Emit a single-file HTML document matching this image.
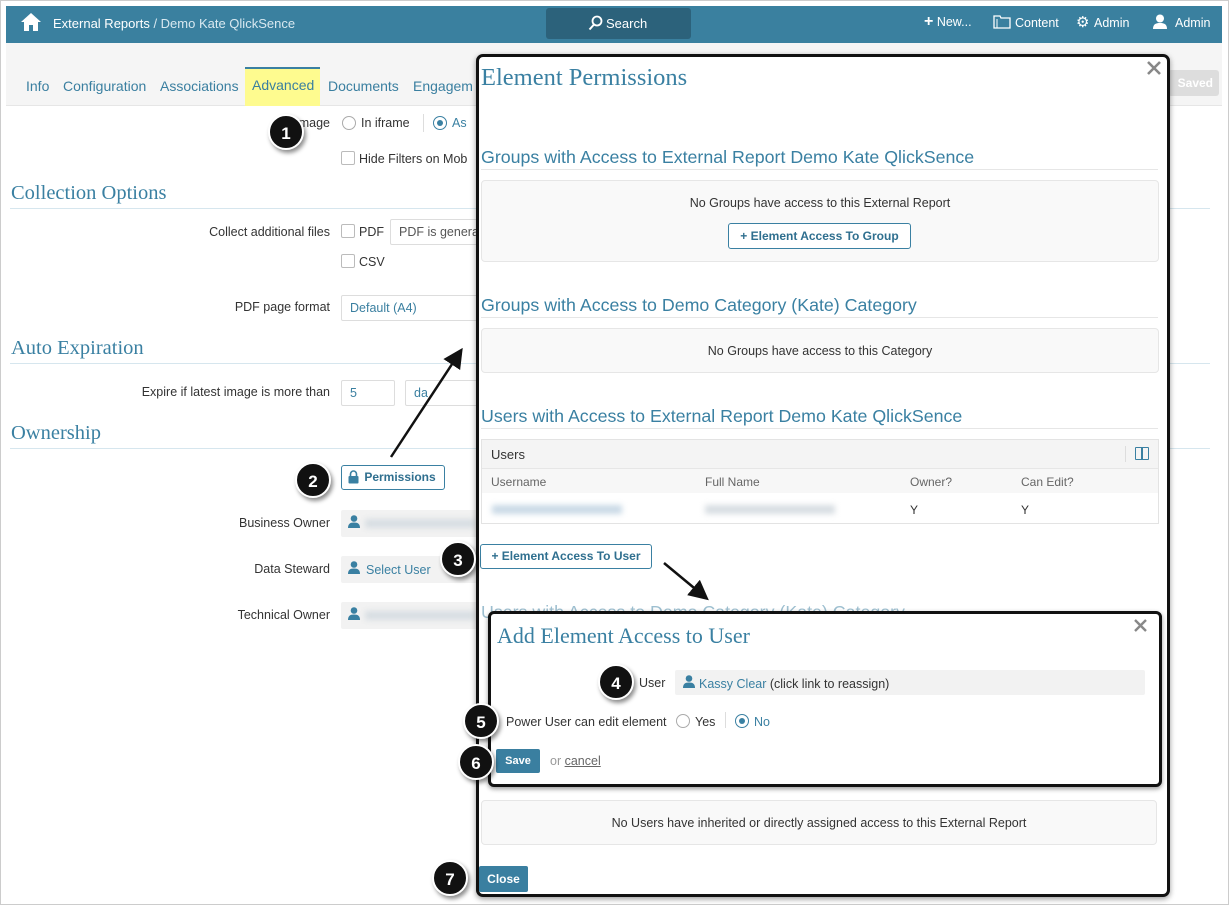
<!DOCTYPE html>
<html><head><meta charset="utf-8"><style>
*{box-sizing:border-box;margin:0;padding:0}
body{width:1229px;height:905px;position:relative;overflow:hidden;background:#fff;font-family:"Liberation Sans",Arial,sans-serif;font-size:13px;color:#333}
.a{position:absolute;white-space:nowrap}
.nav{left:6px;top:6px;width:1216px;height:37px;background:#3a809f;color:#fff}
.sub{left:6px;top:43px;width:1216px;height:63px;background:#f5f5f5;border-bottom:1px solid #e6e6e6}
.tab{color:#3a7fa0;font-size:14px;top:78px}
.serif{font-family:"Liberation Serif",serif;color:#3a80a2}
.lbl{font-size:12.5px;color:#333;text-align:right}
.r{right:899px}
.hr{height:1px;background:#d6e6ee}
.inp{border:1px solid #ddd;border-radius:2px;background:#fff;height:26px;font-size:12.5px;padding:5px 8px;color:#3a7fa0}
.cb{width:14px;height:14px;border:1px solid #bbb;border-radius:2px;background:#fff}
.usr{background:#f2f2f2;height:27px;border-radius:2px}
.circ{width:36px;height:36px;border-radius:50%;background:#111;color:#fff;font-weight:bold;font-size:17px;text-align:center;line-height:36px;box-shadow:2px 3px 4px rgba(0,0,0,.45);border:2px solid #fff}
.modal{left:476px;top:54px;width:694px;height:843px;border:3px solid #111;border-radius:7px;background:#fff;box-shadow:0 2px 6px rgba(0,0,0,.4)}
.h2{font-size:17.8px;color:#3a80a2}
.well{border:1px solid #e6e6e6;border-radius:4px;background:#f9f9f9}
.btn{border:1px solid #3a80a2;border-radius:3px;background:#fff;color:#2f6f8f;font-weight:bold;font-size:12px;text-align:center}
.pbtn{background:#3a7fa0;color:#fff;font-weight:bold;font-size:12px;border-radius:2px;text-align:center}
.blur{background:#d7dde2;filter:blur(3px);height:9px}
.radio{width:14px;height:14px;border:1px solid #aaa;border-radius:50%;background:#fff}
.radio.on{border-color:#3a80a2}
.radio.on:after{content:"";position:absolute;left:3px;top:3px;width:6px;height:6px;border-radius:50%;background:#3a80a2}
</style></head><body>
<div class="a" style="left:0;top:0;width:1229px;height:905px;border:1px solid #ccc"></div>
<div class="a nav"></div>
<svg class="a" style="left:20px;top:12px" width="22" height="20" viewBox="0 0 22 20"><path d="M11 1L1 10h3v9h5v-6h4v6h5v-9h3z" fill="#fff"/></svg>
<div class="a" style="left:53px;top:16px;color:#fff;font-size:13px">External Reports <span style="color:#d8e8f0">/ Demo Kate QlickSence</span></div>
<div class="a" style="left:546px;top:8px;width:145px;height:31px;background:#2c627b;border-radius:3px"></div>
<svg class="a" style="left:588px;top:15px" width="15" height="16" viewBox="0 0 15 16"><circle cx="9" cy="6" r="4.5" stroke="#fff" stroke-width="1.8" fill="none"/><path d="M6 9.5L1.5 14.5" stroke="#fff" stroke-width="2"/></svg>
<div class="a" style="left:606px;top:16px;color:#fff;font-size:13px">Search</div>
<div class="a" style="left:924px;top:15px;color:#fff;font-size:12.5px"><b style="font-size:16px;line-height:12px">+</b> New...</div>
<svg class="a" style="left:993px;top:15px" width="18" height="14" viewBox="0 0 18 14"><path d="M1 1h6l1 2h9v10H1z" stroke="#fff" stroke-width="1.3" fill="none"/><path d="M4 4v9" stroke="#fff"/></svg>
<div class="a" style="left:1015px;top:16px;color:#fff;font-size:12.5px">Content</div>
<div class="a" style="left:1076px;top:13px;color:#fff;font-size:15px">⚙</div>
<div class="a" style="left:1094px;top:16px;color:#fff;font-size:12.5px">Admin</div>
<svg class="a" style="left:1152px;top:14px" width="16" height="15" viewBox="0 0 16 15"><circle cx="8" cy="4.5" r="4" fill="#fff"/><path d="M1 15c0-5 3-6 7-6s7 1 7 6z" fill="#fff"/></svg>
<div class="a" style="left:1175px;top:16px;color:#fff;font-size:12.5px">Admin</div>
<div class="a sub"></div>
<div class="a" style="left:245px;top:67px;width:75px;height:39px;background:#fefb8f;border-top:2px solid #3a80a2"></div>
<div class="a tab" style="left:26px">Info</div>
<div class="a tab" style="left:63px">Configuration</div>
<div class="a tab" style="left:160px">Associations</div>
<div class="a tab" style="left:252px;top:77px">Advanced</div>
<div class="a tab" style="left:328px">Documents</div>
<div class="a tab" style="left:413px">Engagem</div>
<div class="a" style="left:1168px;top:70px;width:51px;height:26px;background:#ddd;border-radius:3px;color:#fff;font-weight:bold;font-size:12px;line-height:26px;text-align:right;padding-right:6px">Saved</div>

<!-- left form -->
<div class="a lbl r" style="top:116px">mage</div>
<div class="a radio" style="left:342px;top:116px"></div>
<div class="a lbl" style="left:361px;top:116px">In iframe</div>
<div class="a" style="left:423px;top:114px;width:1px;height:18px;background:#ddd"></div>
<div class="a radio on" style="left:433px;top:116px"></div>
<div class="a lbl" style="left:452px;top:116px;color:#3a80a2">As</div>
<div class="a cb" style="left:341px;top:151px"></div>
<div class="a lbl" style="left:359px;top:152px">Hide Filters on Mob</div>
<div class="a serif" style="left:11px;top:182px;font-size:20.5px">Collection Options</div>
<div class="a hr" style="left:10px;top:208px;width:466px"></div>
<div class="a lbl r" style="top:225px">Collect additional files</div>
<div class="a cb" style="left:341px;top:224px"></div>
<div class="a lbl" style="left:359px;top:225px">PDF</div>
<div class="a inp" style="left:390px;top:219px;width:90px;color:#555">PDF is genera</div>
<div class="a cb" style="left:341px;top:254px"></div>
<div class="a lbl" style="left:359px;top:255px">CSV</div>
<div class="a lbl r" style="top:300px">PDF page format</div>
<div class="a inp" style="left:341px;top:295px;width:140px">Default (A4)</div>
<div class="a serif" style="left:11px;top:337px;font-size:20.5px">Auto Expiration</div>
<div class="a hr" style="left:10px;top:363px;width:466px"></div>
<div class="a hr" style="left:1158px;top:363px;width:52px"></div>
<div class="a hr" style="left:1158px;top:208px;width:52px"></div>
<div class="a hr" style="left:1158px;top:448px;width:52px"></div>
<div class="a lbl r" style="top:385px">Expire if latest image is more than</div>
<div class="a inp" style="left:341px;top:380px;width:54px">5</div>
<div class="a inp" style="left:405px;top:380px;width:76px">da</div>
<div class="a serif" style="left:11px;top:422px;font-size:20.5px">Ownership</div>
<div class="a hr" style="left:10px;top:448px;width:466px"></div>
<div class="a btn" style="left:341px;top:465px;width:104px;height:25px;line-height:23px;padding-left:14px">Permissions</div>
<svg class="a" style="left:348px;top:470px" width="11" height="14" viewBox="0 0 11 14"><path d="M2.5 6V4a3 3 0 0 1 6 0v2" stroke="#3a80a2" stroke-width="1.6" fill="none"/><rect x="0.5" y="6" width="10" height="7.5" rx="1" fill="#3a80a2"/></svg>
<div class="a lbl r" style="top:516px">Business Owner</div>
<div class="a usr" style="left:341px;top:510px;width:140px"></div>
<div class="a blur" style="left:365px;top:519px;width:110px"></div>
<div class="a lbl r" style="top:562px">Data Steward</div>
<div class="a usr" style="left:341px;top:556px;width:140px"></div>
<div class="a lbl" style="left:366px;top:563px;color:#3a80a2">Select User</div>
<div class="a lbl r" style="top:608px">Technical Owner</div>
<div class="a usr" style="left:341px;top:602px;width:140px"></div>
<div class="a blur" style="left:365px;top:611px;width:110px"></div>
<svg class="a" style="left:348px;top:515px" width="12" height="110" viewBox="0 0 12 110"><g fill="#3a80a2"><circle cx="6" cy="3.5" r="3.3"/><path d="M0 13c0-4 2-5.5 6-5.5s6 1.5 6 5.5z"/><circle cx="6" cy="49.5" r="3.3"/><path d="M0 59c0-4 2-5.5 6-5.5s6 1.5 6 5.5z"/><circle cx="6" cy="95.5" r="3.3"/><path d="M0 105c0-4 2-5.5 6-5.5s6 1.5 6 5.5z"/></g></svg>

<!-- modal -->
<div class="a modal"></div>
<div class="a serif" style="left:481px;top:64px;font-size:24.5px">Element Permissions</div>
<svg class="a" style="left:1147px;top:61px" width="14" height="14" viewBox="0 0 14 14"><path d="M1 1L13 13M13 1L1 13" stroke="#888" stroke-width="2.6"/></svg>
<div class="a h2" style="left:481px;top:147px">Groups with Access to External Report Demo Kate QlickSence</div>
<div class="a hr" style="left:481px;top:169px;width:677px;background:#e6e6e6"></div>
<div class="a well" style="left:481px;top:180px;width:678px;height:82px"></div>
<div class="a" style="left:481px;top:196px;width:678px;text-align:center;font-size:12.5px">No Groups have access to this External Report</div>
<div class="a btn" style="left:728px;top:223px;width:183px;height:26px;line-height:24px">+ Element Access To Group</div>
<div class="a h2" style="left:481px;top:295px">Groups with Access to Demo Category (Kate) Category</div>
<div class="a hr" style="left:481px;top:317px;width:677px;background:#e6e6e6"></div>
<div class="a well" style="left:481px;top:328px;width:678px;height:45px"></div>
<div class="a" style="left:481px;top:344px;width:678px;text-align:center;font-size:12.5px">No Groups have access to this Category</div>
<div class="a h2" style="left:481px;top:406px">Users with Access to External Report Demo Kate QlickSence</div>
<div class="a hr" style="left:481px;top:428px;width:677px;background:#e6e6e6"></div>
<div class="a" style="left:481px;top:439px;width:678px;height:85px;border:1px solid #e3e3e3;background:#fff"></div>
<div class="a" style="left:482px;top:440px;width:676px;height:29px;background:#f4f4f4;border-bottom:1px solid #e6e6e6"></div>
<div class="a" style="left:491px;top:447px;font-size:13px">Users</div>
<div class="a" style="left:1125px;top:446px;width:1px;height:16px;background:#ddd"></div>
<div class="a" style="left:1135px;top:447px;width:14px;height:13px;border:1.5px solid #3a80a2;border-radius:1px"></div>
<div class="a" style="left:1141px;top:447px;width:1.5px;height:13px;background:#3a80a2"></div>
<div class="a" style="left:482px;top:469px;width:676px;height:24px;background:#f7f7f7"></div>
<div class="a" style="left:491px;top:475px;font-size:12px;color:#666">Username</div>
<div class="a" style="left:705px;top:475px;font-size:12px;color:#666">Full Name</div>
<div class="a" style="left:910px;top:475px;font-size:12px;color:#666">Owner?</div>
<div class="a" style="left:1021px;top:475px;font-size:12px;color:#666">Can Edit?</div>
<div class="a blur" style="left:492px;top:505px;width:130px;background:#c9d9e6"></div>
<div class="a blur" style="left:705px;top:505px;width:130px"></div>
<div class="a" style="left:910px;top:503px;font-size:12px">Y</div>
<div class="a" style="left:1021px;top:503px;font-size:12px">Y</div>
<div class="a btn" style="left:480px;top:544px;width:172px;height:25px;line-height:23px">+ Element Access To User</div>
<div class="a h2" style="left:481px;top:602px;color:#9dbfd0">Users with Access to Demo Category (Kate) Category</div>
<div class="a well" style="left:481px;top:800px;width:676px;height:45px"></div>
<div class="a" style="left:481px;top:816px;width:676px;text-align:center;font-size:12.5px">No Users have inherited or directly assigned access to this External Report</div>
<div class="a pbtn" style="left:479px;top:866px;width:49px;height:26px;line-height:26px">Close</div>

<!-- submodal -->
<div class="a" style="left:488px;top:611px;width:674px;height:176px;border:3px solid #111;border-radius:6px;background:#fff;box-shadow:0 2px 5px rgba(0,0,0,.4)"></div>
<div class="a serif" style="left:497px;top:623px;font-size:22px">Add Element Access to User</div>
<svg class="a" style="left:1134px;top:619px" width="13" height="13" viewBox="0 0 13 13"><path d="M1 1L12 12M12 1L1 12" stroke="#888" stroke-width="2.4"/></svg>
<div class="a lbl" style="left:639px;top:676px">User</div>
<div class="a usr" style="left:675px;top:670px;width:470px;height:25px"></div>
<svg class="a" style="left:683px;top:675px" width="12" height="14" viewBox="0 0 12 14"><circle cx="6" cy="3.5" r="3.3" fill="#3a80a2"/><path d="M0 13c0-4 2-5.5 6-5.5s6 1.5 6 5.5z" fill="#3a80a2"/></svg>
<div class="a lbl" style="left:699px;top:677px"><span style="color:#3a80a2">Kassy Clear</span> (click link to reassign)</div>
<div class="a lbl" style="left:506px;top:715px">Power User can edit element</div>
<div class="a radio" style="left:676px;top:714px"></div>
<div class="a lbl" style="left:695px;top:715px">Yes</div>
<div class="a" style="left:725px;top:712px;width:1px;height:16px;background:#ddd"></div>
<div class="a radio on" style="left:735px;top:714px"></div>
<div class="a lbl" style="left:754px;top:715px;color:#3a80a2">No</div>
<div class="a pbtn" style="left:496px;top:749px;width:44px;height:24px;line-height:24px;font-size:11px">Save</div>
<div class="a" style="left:550px;top:754px;font-size:12.5px;color:#999">or <span style="color:#666;text-decoration:underline">cancel</span></div>

<!-- arrows -->
<svg class="a" style="left:0;top:0" width="1229" height="905">
<defs><marker id="m" markerWidth="8" markerHeight="8" refX="6" refY="4" orient="auto"><path d="M0 0L8 4L0 8z" fill="#111"/></marker></defs>
<line x1="391" y1="457" x2="460" y2="352" stroke="#111" stroke-width="2.5" marker-end="url(#m)"/>
<line x1="664" y1="563" x2="705" y2="597" stroke="#111" stroke-width="2.5" marker-end="url(#m)"/>
</svg>

<div class="a circ" style="left:268px;top:114px">1</div>
<div class="a circ" style="left:295px;top:462px">2</div>
<div class="a circ" style="left:440px;top:541px">3</div>
<div class="a circ" style="left:598px;top:664px">4</div>
<div class="a circ" style="left:463px;top:703px">5</div>
<div class="a circ" style="left:458px;top:744px">6</div>
<div class="a circ" style="left:432px;top:860px">7</div>
</body></html>
